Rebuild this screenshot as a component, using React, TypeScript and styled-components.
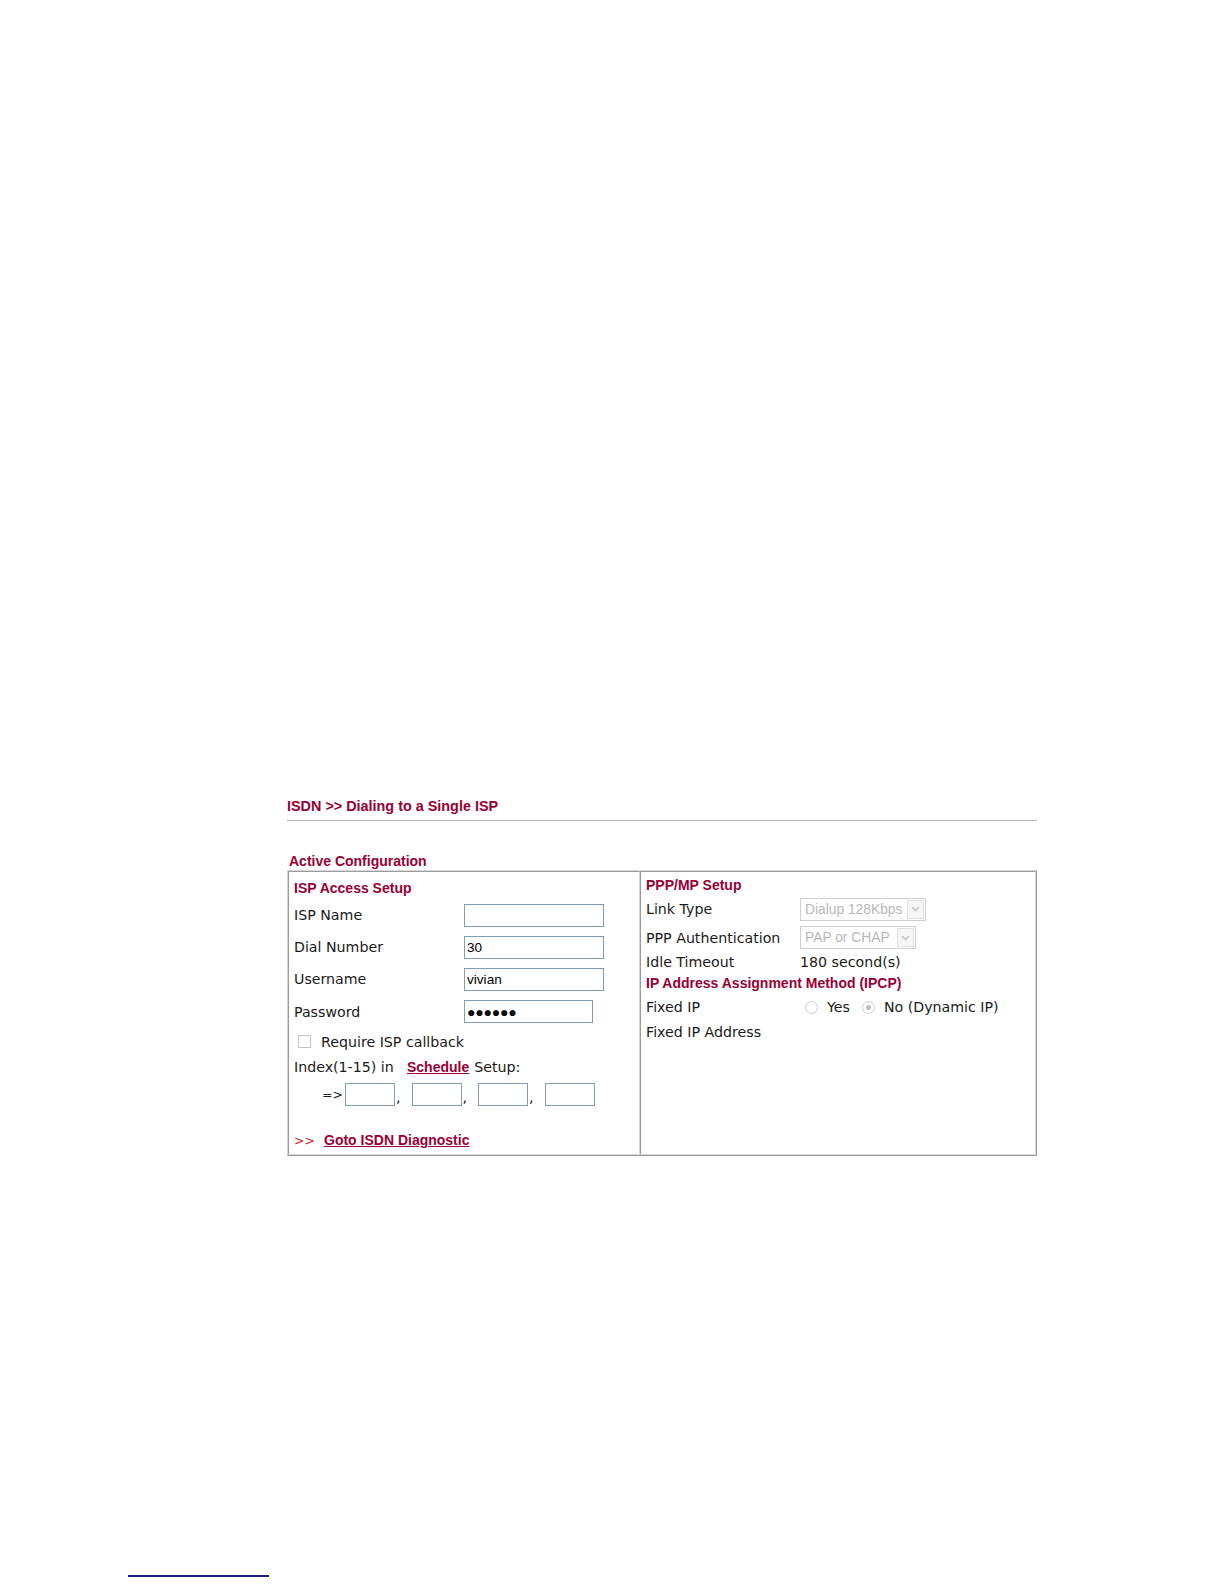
import React from "react";
import styled, { createGlobalStyle } from "styled-components";

const GlobalStyle = createGlobalStyle`
  html, body {
    margin: 0;
    padding: 0;
    background: #ffffff;
  }
  body {
    font-family: "DejaVu Sans", Verdana, sans-serif;
    color: #1a1a1a;
  }
`;

const CRIMSON = "#990033";

const Page = styled.div`
  padding-top: 798px;
`;

const Content = styled.div`
  margin-left: 287px;
  width: 750px;
`;

const PageTitle = styled.div`
  font-family: "Liberation Sans", Arial, sans-serif;
  font-weight: bold;
  font-size: 14.4px;
  line-height: 16px;
  color: ${CRIMSON};
`;

const Rule = styled.div`
  height: 1px;
  background: #b4b4b4;
  margin-top: 6px;
`;

const SectionTitle = styled.div`
  font-family: "Liberation Sans", Arial, sans-serif;
  font-weight: bold;
  font-size: 14px;
  line-height: 16px;
  color: ${CRIMSON};
  margin: 32px 0 1px 2px;
`;

const Frame = styled.div`
  display: grid;
  grid-template-columns: 352px 1fr;
  height: 286px;
  box-sizing: border-box;
  border: 1px solid;
  border-color: #d6d6d6 #9c9c9c #9c9c9c #d6d6d6;
`;

const Cell = styled.div`
  border: 1px solid;
  border-color: #9c9c9c #d6d6d6 #d6d6d6 #9c9c9c;
  padding: 4px 5px 0 5px;
  display: flex;
  flex-direction: column;
  font-size: 14.2px;
`;

const CellHeading = styled.div<{ $h: number }>`
  font-family: "Liberation Sans", Arial, sans-serif;
  font-weight: bold;
  font-size: 14px;
  color: ${CRIMSON};
  height: ${(p) => p.$h}px;
  display: flex;
  align-items: center;
`;

const Row = styled.div<{ $h: number; $label: number }>`
  display: grid;
  grid-template-columns: ${(p) => p.$label}px 1fr;
  align-items: center;
  height: ${(p) => p.$h}px;
  white-space: nowrap;
`;

const FlowRow = styled.div<{ $h: number; $indent?: number; $top?: number }>`
  display: flex;
  align-items: center;
  height: ${(p) => p.$h}px;
  padding-left: ${(p) => p.$indent ?? 0}px;
  margin-top: ${(p) => p.$top ?? 0}px;
  white-space: nowrap;
`;

const TextInput = styled.input<{ $w: number }>`
  width: ${(p) => p.$w}px;
  height: 23px;
  box-sizing: border-box;
  border: 1px solid #7f9db9;
  padding: 0 2px;
  margin: 0;
  font-family: "Liberation Sans", Arial, sans-serif;
  font-size: 13.6px;
  color: #000;
  background: #fff;
  outline: none;
`;

const DotsInput = styled(TextInput)`
  font-size: 14px;
  letter-spacing: -0.2px;
`;

const Checkbox = styled.span`
  display: inline-block;
  width: 13px;
  height: 13px;
  box-sizing: border-box;
  border: 1px solid #c4c4c4;
  background: #fff;
  margin-right: 10px;
`;

const IndexLabel = styled.span`
  display: inline-block;
  width: 113px;
`;

const Link = styled.a`
  font-family: "Liberation Sans", Arial, sans-serif;
  font-weight: bold;
  font-size: 14px;
  color: ${CRIMSON};
  text-decoration: underline;
  cursor: pointer;
`;

const SetupText = styled.span`
  margin-left: 5px;
`;

const Pointer = styled.span`
  display: inline-block;
  width: 23px;
  font-size: 12.5px;
`;

const Arrows = styled.span`
  display: inline-block;
  width: 30px;
  color: #d42020;
  font-size: 12.5px;
`;

const Comma = styled.span`
  display: inline-block;
  width: 16.5px;
  padding-left: 1px;
  box-sizing: border-box;
  align-self: flex-end;
  line-height: 21px;
`;

const SelectWrap = styled.div<{ $w: number }>`
  position: relative;
  width: ${(p) => p.$w}px;
  height: 23px;
  box-sizing: border-box;
  border: 1px solid #cfcfcf;
  background: #fff;
  font-family: "Liberation Sans", Arial, sans-serif;
  font-size: 13.8px;
  color: #b8b8b8;
  display: flex;
  align-items: center;
  padding-left: 4px;
`;

const SelectArrow = styled.span`
  position: absolute;
  right: 1px;
  top: 1px;
  width: 17px;
  height: 19px;
  box-sizing: border-box;
  border: 1px solid #e0e0e0;
  background: #f6f6f6;
  display: flex;
  align-items: center;
  justify-content: center;
`;

const Radio = styled.span<{ $checked?: boolean }>`
  position: relative;
  display: inline-block;
  width: 13px;
  height: 13px;
  box-sizing: border-box;
  border: 1px solid #cdcdcd;
  border-radius: 50%;
  background: #fff;
  margin: 0 9px 0 5px;

  &::after {
    content: "";
    display: ${(p) => (p.$checked ? "block" : "none")};
    position: absolute;
    left: 3px;
    top: 3px;
    width: 5px;
    height: 5px;
    border-radius: 50%;
    background: #bdbdbd;
  }
`;

const RadioLabel = styled.span`
  margin-right: 7px;
`;

const Footnote = styled.div`
  margin: 419px 0 0 128px;
  width: 141px;
  height: 2px;
  background: #1c1c8a;
`;

const Select = ({ w, value }: { w: number; value: string }) => (
  <SelectWrap $w={w}>
    {value}
    <SelectArrow>
      <svg width="9" height="6" viewBox="0 0 9 6">
        <path d="M1 1 L4.5 4.5 L8 1" fill="none" stroke="#c6c6c6" strokeWidth="1.6" />
      </svg>
    </SelectArrow>
  </SelectWrap>
);

const LEFT = 170;
const RIGHT = 154;

const App = () => {
  return (
    <Page>
      <GlobalStyle />
      <Content>
        <PageTitle>ISDN &gt;&gt; Dialing to a Single ISP</PageTitle>
        <Rule />
        <SectionTitle>Active Configuration</SectionTitle>
        <Frame>
          <Cell>
            <CellHeading $h={23}>ISP Access Setup</CellHeading>
            <Row $h={32} $label={LEFT}>
              <span>ISP Name</span>
              <TextInput $w={140} defaultValue="" />
            </Row>
            <Row $h={32} $label={LEFT}>
              <span>Dial Number</span>
              <TextInput $w={140} defaultValue="30" />
            </Row>
            <Row $h={32} $label={LEFT}>
              <span>Username</span>
              <TextInput $w={140} defaultValue="vivian" />
            </Row>
            <Row $h={33} $label={LEFT}>
              <span>Password</span>
              <DotsInput $w={129} defaultValue={"\u25CF\u25CF\u25CF\u25CF\u25CF\u25CF"} />
            </Row>
            <FlowRow $h={25} $indent={4} $top={1}>
              <Checkbox />
              Require ISP callback
            </FlowRow>
            <FlowRow $h={26}>
              <IndexLabel>Index(1-15) in</IndexLabel>
              <Link>Schedule</Link>
              <SetupText>Setup:</SetupText>
            </FlowRow>
            <FlowRow $h={28} $indent={28}>
              <Pointer>=&gt;</Pointer>
              <TextInput $w={50} />
              <Comma>,</Comma>
              <TextInput $w={50} />
              <Comma>,</Comma>
              <TextInput $w={50} />
              <Comma>,</Comma>
              <TextInput $w={50} />
            </FlowRow>
            <FlowRow $h={20} $top={22}>
              <Arrows>&gt;&gt;</Arrows>
              <Link>Goto ISDN Diagnostic</Link>
            </FlowRow>
          </Cell>
          <Cell>
            <CellHeading $h={17}>PPP/MP Setup</CellHeading>
            <Row $h={32} $label={RIGHT}>
              <span>Link Type</span>
              <Select w={126} value="Dialup 128Kbps" />
            </Row>
            <Row $h={25} $label={RIGHT}>
              <span>PPP Authentication</span>
              <Select w={116} value="PAP or CHAP" />
            </Row>
            <Row $h={24} $label={RIGHT}>
              <span>Idle Timeout</span>
              <span>180 second(s)</span>
            </Row>
            <CellHeading $h={18}>IP Address Assignment Method (IPCP)</CellHeading>
            <Row $h={30} $label={RIGHT}>
              <span>Fixed IP</span>
              <FlowRow $h={30}>
                <Radio />
                <RadioLabel>Yes</RadioLabel>
                <Radio $checked />
                <span>No (Dynamic IP)</span>
              </FlowRow>
            </Row>
            <Row $h={19} $label={RIGHT}>
              <span>Fixed IP Address</span>
              <span />
            </Row>
          </Cell>
        </Frame>
      </Content>
      <Footnote />
    </Page>
  );
};

export default App;
